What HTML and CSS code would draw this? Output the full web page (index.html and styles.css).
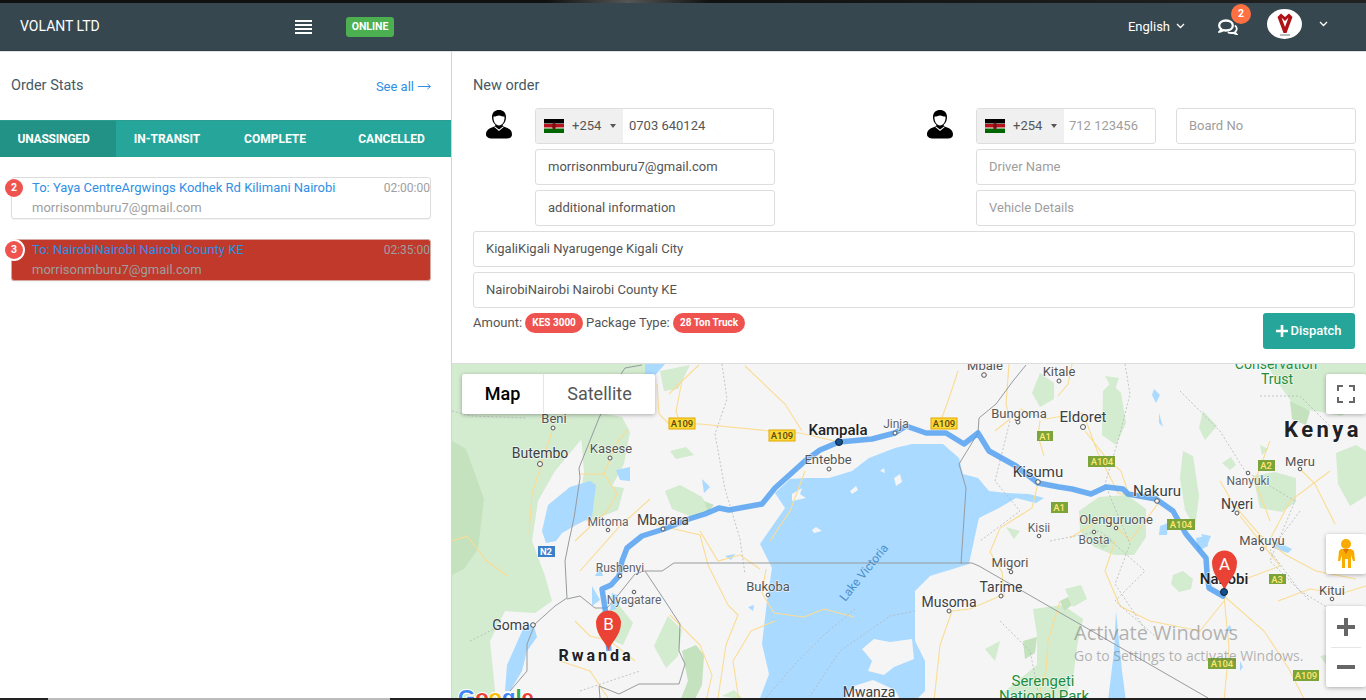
FILE: index.html
```html
<!DOCTYPE html>
<html lang="en">
<head>
<meta charset="utf-8">
<title>Volant Ltd</title>
<link rel="stylesheet" href="styles.css">
</head>
<body>
<div class="top-strip"></div>
<header class="topbar">
  <div class="brand">VOLANT LTD</div>
  <svg class="burger" width="17" height="14" viewBox="0 0 17 14"><path d="M0 1h17M0 5h17M0 9h17M0 13h17" stroke="#fff" stroke-width="2"/></svg>
  <span class="online">ONLINE</span>
  <div class="spacer"></div>
  <div class="lang">English <svg class="chev" width="9" height="6" viewBox="0 0 9 6"><path d="M1 1l3.500 3.500L8 1" fill="none" stroke="#fff" stroke-width="1.300"/></svg></div>
  <div class="chat">
    <svg width="20" height="18" viewBox="0 0 20 18"><path d="M8 2.500C4 2.500 1.200 4.700 1.200 7.500c0 1.500.8 2.700 2 3.600-.2 1-.7 1.800-1.300 2.400 1.400-.1 2.600-.6 3.500-1.300.8.200 1.700.3 2.600.3 4 0 6.800-2.200 6.800-5S12 2.500 8 2.500z" fill="none" stroke="#fff" stroke-width="2.300"/><path d="M16.800 7.500c1.300.8 2 2 2 3.300 0 1.200-.6 2.200-1.600 3 .1.900.6 1.700 1.100 2.200-1.200-.1-2.200-.6-3-1.200-.7.200-1.400.2-2.100.2-1.300 0-2.500-.3-3.400-.8" fill="none" stroke="#fff" stroke-width="1.800"/></svg>
    <span class="chat-badge">2</span>
  </div>
  <div class="avatar">
    <svg width="16" height="24" viewBox="0 0 16 24"><path d="M.5 5L4 1.500 8 5l4-3.500L15.500 5 9.500 21h-3z" fill="#b01116"/><path d="M4.500 5.500L8 15l3.500-9.500L8 9z" fill="#fff"/><path d="M3 23h10" stroke="#777" stroke-width="1"/></svg>
  </div>
  <svg class="chev user-chev" width="9" height="6" viewBox="0 0 9 6"><path d="M1 1l3.500 3.500L8 1" fill="none" stroke="#fff" stroke-width="1.300"/></svg>
</header>

<main class="main">
  <aside class="stats">
    <div class="stats-head">
      <span class="title">Order Stats</span>
      <a class="see-all">See all <svg class="arrow" width="13" height="7" viewBox="0 0 13 7"><path d="M0 3.500h12M9.500 1l3 2.500-3 2.500" fill="none" stroke="#2f8fe6" stroke-width="1"/></svg></a>
    </div>
    <nav class="tabs">
      <span class="tab active">UNASSINGED</span>
      <span class="tab t2">IN-TRANSIT</span>
      <span class="tab t3">COMPLETE</span>
      <span class="tab t4">CANCELLED</span>
    </nav>
    <div class="orders">
      <article class="order">
        <span class="num">2</span>
        <div class="line1"><span class="to">To: Yaya CentreArgwings Kodhek Rd Kilimani Nairobi</span><span class="time">02:00:00</span></div>
        <div class="mail">morrisonmburu7@gmail.com</div>
      </article>
      <article class="order late">
        <span class="num ring">3</span>
        <div class="line1"><span class="to">To: NairobiNairobi Nairobi County KE</span><span class="time">02:35:00</span></div>
        <div class="mail">morrisonmburu7@gmail.com</div>
      </article>
    </div>
  </aside>

  <section class="work">
    <form class="form">
      <div class="title new">New order</div>
      <div class="parties">
        <div class="party left">
          <svg class="person" width="26" height="29" viewBox="0 0 26 29"><path d="M13 0c4 0 7 2.500 7 7 0 3-1 6-3.500 8 0 .8 1 1.500 3 2.200 3.500 1.200 6.500 3 6.500 7.300 0 2.500-2 4-5 4H6c-3 0-6-1.500-6-4 0-4.300 3-6.100 6.500-7.300 2-.7 3-1.400 3-2.200C7 13 6 10 6 7c0-4.500 3-7 7-7z" fill="#000"/><path d="M7.500 6.500c2 .5 3.500-1 5.500-1s3.500 1.500 5.500 1c.3 3-.5 6.500-3.200 8.300-1.400.9-3.200.9-4.600 0C8 13 7.200 9.500 7.500 6.500z" fill="#fff"/><path d="M9 16.500l4 3 4-3 .8.500-4.800 4-4.800-4z" fill="#fff"/></svg>
          <div class="stack">
            <div class="field phone">
              <span class="dial"><svg class="flag" width="20" height="14" viewBox="0 0 20 14"><rect width="20" height="5" fill="#000"/><rect y="4.500" width="20" height="1" fill="#fff"/><rect y="5" width="20" height="4" fill="#b5121b"/><rect y="8.500" width="20" height="1" fill="#fff"/><rect y="9.500" width="20" height="4.500" fill="#006600"/><ellipse cx="10" cy="7" rx="1.800" ry="3.500" fill="#7a1115"/></svg><span class="code">+254</span><i class="caret"></i></span>
              <span class="val">0703 640124</span>
            </div>
            <div class="field wide"><span class="val">morrisonmburu7@gmail.com</span></div>
            <div class="field wide"><span class="val">additional information</span></div>
          </div>
        </div>
        <div class="party right">
          <svg class="person" width="26" height="29" viewBox="0 0 26 29"><path d="M13 0c4 0 7 2.500 7 7 0 3-1 6-3.500 8 0 .8 1 1.500 3 2.200 3.500 1.200 6.500 3 6.500 7.300 0 2.500-2 4-5 4H6c-3 0-6-1.500-6-4 0-4.300 3-6.100 6.500-7.300 2-.7 3-1.400 3-2.200C7 13 6 10 6 7c0-4.500 3-7 7-7z" fill="#000"/><path d="M7.500 6.500c2 .5 3.500-1 5.500-1s3.500 1.500 5.500 1c.3 3-.5 6.500-3.200 8.300-1.400.9-3.200.9-4.600 0C8 13 7.200 9.500 7.500 6.500z" fill="#fff"/><path d="M9 16.500l4 3 4-3 .8.500-4.800 4-4.800-4z" fill="#fff"/></svg>
          <div class="stack">
            <div class="split">
              <div class="field phone short">
                <span class="dial"><svg class="flag" width="20" height="14" viewBox="0 0 20 14"><rect width="20" height="5" fill="#000"/><rect y="4.500" width="20" height="1" fill="#fff"/><rect y="5" width="20" height="4" fill="#b5121b"/><rect y="8.500" width="20" height="1" fill="#fff"/><rect y="9.500" width="20" height="4.500" fill="#006600"/><ellipse cx="10" cy="7" rx="1.800" ry="3.500" fill="#7a1115"/></svg><span class="code">+254</span><i class="caret"></i></span>
                <span class="ph">712 123456</span>
              </div>
              <div class="field grow"><span class="ph">Board No</span></div>
            </div>
            <div class="field"><span class="ph">Driver Name</span></div>
            <div class="field"><span class="ph">Vehicle Details</span></div>
          </div>
        </div>
      </div>
      <div class="field addr"><span class="val">KigaliKigali Nyarugenge Kigali City</span></div>
      <div class="field addr"><span class="val">NairobiNairobi Nairobi County KE</span></div>
      <div class="summary">
        <div class="facts">Amount: <span class="pill">KES 3000</span> Package Type: <span class="pill">28 Ton Truck</span></div>
        <button class="dispatch" type="button"><svg width="12" height="12" viewBox="0 0 12 12"><path d="M6 0v12M0 6h12" stroke="#fff" stroke-width="2.600"/></svg>Dispatch</button>
      </div>
    </form>

    <div class="map">
      <svg class="map-art" width="914" height="337" viewBox="452 363 914 337">
        <rect x="452" y="363" width="914" height="337" fill="#f5f5f5"/>
        <g fill="#d3ebcf">
          <path d="M452 363H660L645 378 620 378 604 400 598 420 580 440 555 470 538 500 532 540 545 575 552 600 535 612 505 610 490 640 496 700H452z"/>
          <path d="M580 420l20-8 22 4 8 15-6 32-12 22 12 2-6 22-30 12-10-10 6-40z"/>
          <path d="M665 490l15-6 22 12 8 14-18 6-20-8zM605 612l14-8 14 18-10 22-14-6zM654 645l14-30 14 14-4 26-12 12zM660 370l30-6-12 24-14 2zM670 450l16-4 8 8-18 4z"/>
          <path d="M1079 510l20-14 28-2 19 14 0 28-12 18-20 0-20-8-14-16z"/>
          <path d="M1103 390l8-8 10 10 5 30-10 22-14-10zM1183 450l10 5 6 40-4 32-10-18-5-32z"/>
          <path d="M1266 363h100v40l-25 12-20-4-25-4-18-25zM1253 475l22-4 21 6 0 24-14 10-22-4zM1336 452l20-8 10 6v45l-16 10-12-22z"/>
          <path d="M1173 574l10-4 10 8-2 10-12 3-8-8zM1020 530l-14-4 8 12zM1040 372l14 10 0 16-14 8-8-14zM1105 375l14 2-5 14zM1203 410l14 15-12 14-6-12zM1222 462l9-6 5 8-6 5zM1260 444l8 4-6 6z"/>
          <path d="M1033 608l30-4 20 14-6 28-4 32-10 22h-38l-22-8 14-12 20-16 0-30zM1065 588l16-4 6 14-14 8zM1000 640l-15 8 10 12zM1320 655l46-10v40l-26 0zM722 695l12-6 10 10z"/>
        </g>
        <g fill="#c3e2bd">
          <path d="M452 440l14 8 18 50-6 50-14 20-12 6zM682 650l14-6 8 10-2 30-8 16h-14l8-20zM1023 640l14-4-2 16-10 6zM1095 540l12-6 6 6-10 8zM1290 400l20 10-4 14-14-6zM1060 600l8-4 4 8-8 6zM704 500l10 4-6 6z"/>
        </g>
        <path d="M775 492L790 478 805 477 829 477 852 470 869 457 895 447 912 443 943 443 959 457 963 473 978 477 989 490 1006 492 1029 493 1044 497 1036 502 1016 497 999 507 979 517 976 530 969 563 930 575 915 590 915 640 925 660 925 690 915 700H759L769 673 762 643 767 600 772 567 760 543 785 507Z" fill="#aadaff"/>
        <g fill="#f5f5f5">
          <path d="M792 493l10-6-2 6 6 4-14 3zM862 648l12-10 16 3 22-3 2 20-20 8-10 8-16-4 4-10zM845 700l6-14 22-7 22 10 6 11zM812 529l4-3 6 4-8 2zM894 477l6-4 2 8-6 4zM850 490l6-5 2 4-6 4zM880 470l4-3 1 5z"/>
        </g>
        <g fill="#aadaff">
          <path d="M542 530l6-26 22-18 20-6 6 4-4 32-16 8-14 8-6 8-10 2z"/>
          <path d="M505 690l2-26 16-36 10-6 4 14-10 14-5 20-12 20z"/>
          <path d="M645 363h20l-14 16-6-6zM616 469l14-3 0 14-10-1zM1160 525l8-3-1 12-8 0zM1196 537l10-2 2 10-10 5zM1201 533l10 2-4 10zM1154 388l6 6-4 8-4-8zM1159 412l4 14-4-4zM1276 540l16 8-4 4-12-4zM702 478l8 8-6 6zM600 565l-5 10 8 0zM592 585l8 14-8 6zM612 592l6 2-2 14-6 2zM1116 610l6 60 4 30h-18l6-50zM1240 660l3 6-3 4zM725 555l10-2-4 6zM748 606l6-2-1 6zM1230 624l-6 6 8 0z"/>
        </g>
        <g fill="none" stroke="#fbdc93" stroke-width="1.100">
          <path d="M745 365l40 38 17 27M669 393l13-13 17-16M659 413l10 10 31 0 70 7 30 2 39 9M682 380l-6 30 4 13M659 413l-2-30M580 473l24 0 13 20-10 17-32 30M529 533l3-40 20-63M452 540l15-5 20 25 20 15M604 473l12-30 12-15M650 498l-30 27-40 45M640 520l60 14 8 30 20 40 10 10-12 30-8 53M700 530l18 30 22-6 20 14M766 568l-4 24 12 20 30 4 20-8 30 8M805 470l-15 40-20 30M670 614l30 30 12 30-6 26M775 620l-24 10-18 30 6 40M575 620l15 15 20 5 25 20M560 660l30 10 20 30"/>
          <path d="M1020 408l25 10 38-6 15 40 20 40 38 8M1038 482l-6 25-32 20-10 24 12 20 2 25M1085 430l22 28 14 12 8 24M1160 500l-30 40-24-25-36 22M1220 480l14 24 26 30 26 20 30 16 40 8M1224 595l40 35 25 38 16 32M1224 595l5 52-5 53M1240 515l40 50-40 15M1000 595l-30 13-18 2-12 34-6 56M1150 620l50 10 24-30M1330 470l-40 30-25 48M1270 440l-15 40 15 40M1300 468l15 15 20 40M1278 600l32-12 30 5 26-8M1009 363l-3 40 4 15-15 12M1115 540l-10 30 15 35 30 15M958 370l-10 30-8 22M1072 363l-4 20-10 12M1040 420l-2 15 6 20M1060 600l-12 40-2 30-8 28"/>
        </g>
        <g fill="none" stroke="#b3b7ba" stroke-width=".8" stroke-dasharray="2 2">
          <path d="M452 410l20 5 55 2M722 363l5 35-12 35 10 55 15 50 5 35M855 608l-30 25-30 30-30 35M915 610l-25 5-50 35-30 45M1010 420l-15 60 25 30-40 30M1125 363l5 30-10 40-15 50 25 60-15 40 30 45M1180 390l40 40 25 40 50 30-25 60 40 40M1050 540l50-10 45 40-30 30 40 35M1260 395l40 0 30 30M1300 510l-30 40 30 40 50 30M1000 620l30 30 10 50M470 640l30-15M580 690l30-10 30-10"/>
        </g>
        <g fill="none" stroke="#979b9e" stroke-width="1" stroke-linejoin="round">
          <path d="M642 364l-17 3-8 12-18 38-20 50 1 10-6 40-5 23-4 20 2 37-12 8-20 18-8 20 0 27-17 20"/>
          <path d="M567 598l13-3 15 12 12 0 12-14 16-20 9-3 18 0 12-8h298l7 3 229 132"/>
          <path d="M961 563l5-76-7-24 19-31 1-15 17-14 17-23 13-16"/>
          <path d="M645 570l20 30 15 23-1 27 6 13-6 20-40 0-20 10-20-8 1 12"/>
        </g>
        <path d="M609 650L605 607 602 588 611 584 619 575 622 560 627 547 642 535 664 528 689 518 705 513 719 507 729 509 762 503 775 487 805 460 820 449 839 441 872 438 895 432 906 425 926 432 946 432 964 443 978 432 989 450 1016 465 1038 482 1059 486 1072 488 1091 493 1106 486 1123 488 1128 493 1156 498 1173 510 1186 533 1206 557 1207 572 1209 587 1223 595 1224 591" fill="none" stroke="#4a9cf0" stroke-opacity=".8" stroke-width="5.500" stroke-linejoin="round"/>
        <g fill="#f8f8f8" stroke="#555" stroke-width="1">
          <circle cx="553" cy="427" r="2"/><circle cx="540" cy="463" r="2.500"/><circle cx="610" cy="457" r="2"/><circle cx="829" cy="468" r="2"/><circle cx="608" cy="529" r="1.800"/><circle cx="663" cy="528" r="2"/><circle cx="620" cy="575" r="1.800"/><circle cx="634" cy="591" r="1.800"/><circle cx="768" cy="594" r="1.800"/><circle cx="533" cy="624" r="2.300"/><circle cx="895" cy="432" r="2"/>
          <circle cx="984" cy="374" r="2.300"/><circle cx="1059" cy="380" r="2"/><circle cx="1018" cy="421" r="2"/><circle cx="1083" cy="426" r="2.500"/><circle cx="1300" cy="468" r="1.800"/><circle cx="1248" cy="472" r="1.800"/><circle cx="1038" cy="481" r="2.300"/><circle cx="1157" cy="500" r="2.300"/><circle cx="1237" cy="512" r="2"/><circle cx="1116" cy="527" r="1.800"/><circle cx="1039" cy="535" r="1.800"/><circle cx="1094" cy="531" r="1.800"/><circle cx="1262" cy="548" r="1.800"/><circle cx="1011" cy="571" r="1.800"/><circle cx="1001" cy="595" r="2"/><circle cx="949" cy="610" r="2"/><circle cx="1332" cy="598" r="1.800"/>
        </g>
        <circle cx="839" cy="441" r="3.500" fill="#15508c" stroke="#123" stroke-width="1"/>
        <g class="lbl">
          <text x="554" y="422" class="s13">Beni</text>
          <text x="540" y="457" class="s14">Butembo</text>
          <text x="611" y="452" class="s13">Kasese</text>
          <text x="838" y="434" class="s15 m">Kampala</text>
          <text x="896" y="427" class="s12">Jinja</text>
          <text x="828" y="463" class="s13">Entebbe</text>
          <text x="608" y="525" class="s12">Mitoma</text>
          <text x="663" y="524" class="s14">Mbarara</text>
          <text x="620" y="571" class="s12">Rushenyi</text>
          <text x="634" y="603" class="s12">Nyagatare</text>
          <text x="768" y="590" class="s13">Bukoba</text>
          <text x="511" y="629" class="s14">Goma</text>
          <text x="596" y="660" class="country">Rwanda</text>
          <text x="869" y="696" class="s14">Mwanza</text>
          <text x="985" y="369" class="s13">Mbale</text>
          <text x="1059" y="375" class="s13">Kitale</text>
          <text x="1019" y="417" class="s13">Bungoma</text>
          <text x="1083" y="421" class="s15">Eldoret</text>
          <text x="1300" y="465" class="s13">Meru</text>
          <text x="1248" y="484" class="s12">Nanyuki</text>
          <text x="1038" y="476" class="s15">Kisumu</text>
          <text x="1157" y="495" class="s15">Nakuru</text>
          <text x="1237" y="508" class="s14">Nyeri</text>
          <text x="1116" y="523" class="s13">Olenguruone</text>
          <text x="1039" y="531" class="s12">Kisii</text>
          <text x="1094" y="543" class="s12">Bosta</text>
          <text x="1262" y="544" class="s13">Makuyu</text>
          <text x="1010" y="566" class="s13">Migori</text>
          <text x="1001" y="591" class="s14">Tarime</text>
          <text x="949" y="606" class="s14">Musoma</text>
          <text x="1332" y="594" class="s13">Kitui</text>
          <text x="1224" y="583" class="s15 m">Nairobi</text>
          <text x="1323" y="436" class="kenya">Kenya</text>
          <text x="1276" y="368" class="s14 park">Conservation</text>
          <text x="1277" y="383" class="s14 park">Trust</text>
          <text x="1043" y="685" class="s15 park">Serengeti</text>
          <text x="1044" y="700" class="s15 park">National Park</text>
          <text transform="translate(867 574) rotate(-51)" class="lake">Lake Victoria</text>
        </g>
        <g class="shield y">
          <rect x="669" y="417" width="26" height="11"/><text x="682" y="426">A109</text>
          <rect x="769" y="429" width="26" height="11"/><text x="782" y="438">A109</text>
          <rect x="931" y="417" width="26" height="11"/><text x="944" y="426">A109</text>
        </g>
        <g class="shield g">
          <rect x="1037" y="430" width="16" height="10"/><text x="1045" y="439">A1</text>
          <rect x="1088" y="455" width="27" height="11"/><text x="1102" y="464">A104</text>
          <rect x="1258" y="459" width="17" height="11"/><text x="1266" y="468">A2</text>
          <rect x="1051" y="501" width="17" height="11"/><text x="1059" y="510">A1</text>
          <rect x="1167" y="518" width="28" height="11"/><text x="1181" y="527">A104</text>
          <rect x="1269" y="573" width="17" height="10"/><text x="1277" y="582">A3</text>
          <rect x="1208" y="657" width="28" height="11"/><text x="1222" y="666">A104</text>
          <rect x="1293" y="669" width="26" height="11"/><text x="1306" y="678">A109</text>
        </g>
        <g class="shield b">
          <rect x="538" y="545" width="17" height="11"/><text x="546" y="554">N2</text>
        </g>
        <path d="M1224.500 590c-1.500-8-12.500-15-12.500-28a12.500 12.500 0 1 1 25 0c0 13-11 20-12.500 28z" fill="#ea4335"/>
        <text x="1224.500" y="569" class="pin">A</text>
        <path d="M608.500 650c-1.500-8-12.500-15-12.500-28a12.500 12.500 0 1 1 25 0c0 13-11 20-12.500 28z" fill="#ea4335"/>
        <text x="608.500" y="629" class="pin">B</text>
        <circle cx="1224" cy="591" r="3.500" fill="#15508c" stroke="#123" stroke-width="1"/>
        <text x="458" y="704" class="google"><tspan fill="#4285f4">G</tspan><tspan fill="#ea4335">o</tspan><tspan fill="#fbbc05">o</tspan><tspan fill="#4285f4">g</tspan><tspan fill="#34a853">l</tspan><tspan fill="#ea4335">e</tspan></text>
        <text x="1074" y="639" class="wm big">Activate Windows</text>
        <text x="1074" y="660" class="wm">Go to Settings to activate Windows.</text>
      </svg>
      <div class="maptype">
        <span class="mt on">Map</span>
        <span class="mt">Satellite</span>
      </div>
      <div class="ctrl full"><svg width="18" height="18" viewBox="0 0 18 18"><path d="M1 6V1h5M12 1h5v5M17 12v5h-5M6 17H1v-5" fill="none" stroke="#666" stroke-width="2"/></svg></div>
      <div class="ctrl peg"><svg width="18" height="30" viewBox="0 0 18 30"><circle cx="9" cy="5" r="5" fill="#f9ab00"/><path d="M4 10h10l3 2 1 10h-2l-2-6v13h-3v-9H8v9H5V16l-2 6H1l1-10z" fill="#f9ab00"/><path d="M6 10h6l-3 5z" fill="#e37400"/></svg></div>
      <div class="ctrl zoom">
        <span class="zbtn"><svg width="18" height="18" viewBox="0 0 18 18"><path d="M9 0v18M0 9h18" stroke="#666" stroke-width="4"/></svg></span>
        <span class="zbtn"><svg width="18" height="4" viewBox="0 0 18 4"><path d="M0 2h18" stroke="#666" stroke-width="4"/></svg></span>
      </div>
    </div>
  </section>
</main>
<div class="bottom-strip"><span class="scroll"></span></div>
</body>
</html>
```
FILE: styles.css
```css
* { box-sizing: border-box; }
html, body { margin: 0; padding: 0; height: 700px; overflow: hidden; }
body { font-family: Roboto, "Liberation Sans", sans-serif; font-size: 13px; color: #455a64; background: #fff; display: flex; flex-direction: column; position: relative; }

.top-strip { height: 3px; background: linear-gradient(90deg, #111 0, #111 40%, #555 46%, #111 52%, #222 100%); flex: none; }
.topbar { height: 48px; flex: none; background: #37474f; border-bottom: 1px solid #2f3e46; display: flex; align-items: center; color: #fff; padding: 2px 0 0 20px; }
.brand { width: 275px; font-size: 14px; font-weight: 400; margin-top: -3px; color: #fff; }
.burger { display: block; margin-top: -1px; }
.online { margin-left: 34px; background: #4caf50; color: #fff; font-size: 10.500px; font-weight: 700; line-height: 20px; height: 20px; width: 48px; text-align: center; border-radius: 3px; margin-top: -1px; }
.spacer { flex: 1; }
.lang { font-size: 13px; display: flex; align-items: center; gap: 6px; margin-top: -3px; }
.chev { display: block; }
.chat { position: relative; margin-left: 33px; width: 20px; height: 18px; margin-top: -1px; }
.chat svg { display: block; }
.chat-badge { position: absolute; left: 13px; top: -14px; width: 20px; height: 20px; border-radius: 50%; background: #ff7043; color: #fff; font-size: 10.500px; font-weight: 700; line-height: 20px; text-align: center; }
.avatar { margin-left: 29px; width: 35px; height: 30px; border-radius: 50%; background: #fff; display: flex; align-items: center; justify-content: center; margin-top: -7px; }
.user-chev { margin-left: 17px; margin-right: 38px; margin-top: -7px; }

.main { flex: 1; display: flex; min-height: 0; }
.title { font-size: 14.500px; color: #455a64; }

.stats { width: 452px; flex: none; border-right: 1px solid #d4d4d4; border-top: 1px solid #dde3e6; }
.stats-head { height: 68px; display: flex; align-items: center; justify-content: space-between; padding: 0 20px 2px 11px; }
.see-all { color: #2f8fe6; font-size: 13px; display: flex; align-items: center; gap: 4px; padding-top: 2px; }
.arrow { display: block; margin-top: 1px; }
.tabs { height: 37px; background: #26a69a; display: flex; align-items: center; color: #fff; font-size: 12px; font-weight: 700; border-top: 1px solid #2a9c90; }
.tab { height: 100%; display: flex; align-items: center; justify-content: center; }
.tab.active { width: 116px; background: #229287; padding-right: 9px; letter-spacing: -.2px; }
.t2 { width: 102px; }
.t3 { width: 114px; }
.t4 { width: 119px; }

.orders { padding: 20px 20px 0 11px; display: flex; flex-direction: column; gap: 20px; }
.order { position: relative; height: 42px; border: 1px solid #ddd; border-radius: 3px; background: #fff; box-shadow: 0 1px 1px rgba(0,0,0,.05); padding: 2px 0 0 20px; }
.order.late { background: #c0392b; border-color: #d5a9a4; }
.line1 { display: flex; justify-content: space-between; align-items: baseline; font-size: 13px; line-height: 16px; }
.to { color: #2f8fe6; }
.time { color: #9e9e9e; font-size: 12px; }
.mail { color: #9e9e9e; font-size: 13px; line-height: 16px; margin-top: 4px; }
.num { position: absolute; left: -7px; top: 1px; width: 18px; height: 18px; border-radius: 50%; background: #ef5350; color: #fff; font-size: 10.500px; font-weight: 700; line-height: 18px; text-align: center; }
.num.ring { box-shadow: 0 0 0 2px #fff; }

.work { flex: 1; display: flex; flex-direction: column; min-width: 0; border-top: 1px solid #dde3e6; }
.form { height: 311px; padding: 0 10px 0 21px; flex: none; }
.new { height: 56px; display: flex; align-items: center; padding-top: 10px; }
.parties { display: flex; justify-content: space-between; margin-bottom: 5px; }
.party { display: flex; align-items: flex-start; }
.party.left { width: 302px; }
.party.right { width: 442px; }
.person { margin: 2px 23px 0 13px; flex: none; }
.stack { flex: 1; display: flex; flex-direction: column; gap: 5px; min-width: 0; }
.split { display: flex; gap: 20px; }
.field { height: 36px; border: 1px solid #ddd; border-radius: 3px; background: #fff; display: flex; align-items: center; padding: 0 0 2px 12px; font-size: 13px; color: #555; }
.field.phone { padding: 0; width: 239px; overflow: hidden; }
.field.short { width: 180px; }
.field.grow { flex: 1; }
.field.addr { margin: 0 1px 5px 0; }
.dial { width: 87px; height: 100%; background: #f0f0f0; display: flex; align-items: center; padding: 0 0 1px 8px; color: #555; flex: none; }
.flag { display: block; margin-right: 8px; }
.code { font-size: 13px; margin-top: -1px; }
.caret { width: 0; height: 0; border-left: 3px solid transparent; border-right: 3px solid transparent; border-top: 4px solid #555; margin-left: 9px; }
.phone .val { margin: -2px 0 0 6px; }
.phone .ph { margin: -2px 0 0 5px; }
.val { color: #555; }
.ph { color: #9e9e9e; }
.summary { display: flex; justify-content: space-between; align-items: flex-start; margin-right: 1px; }
.facts { font-size: 13px; line-height: 20px; color: #555; }
.pill { display: inline-block; background: #ef5350; color: #fff; font-size: 10px; font-weight: 700; line-height: 20px; height: 20px; padding: 0 7px; border-radius: 10px; vertical-align: top; }
.dispatch { width: 92px; height: 36px; border: 0; border-radius: 3px; background: #26a69a; color: #fff; font: 500 13px Roboto, sans-serif; display: flex; align-items: center; justify-content: center; gap: 2px; padding: 0 0 1px; }

.map { position: relative; flex: 1; min-height: 0; border-top: 1px solid #ddd; overflow: hidden; }
.map-art { display: block; }
.lbl text { font-family: Roboto, sans-serif; text-anchor: middle; fill: #3c4043; stroke: rgba(255,255,255,.6); stroke-width: 1.500px; paint-order: stroke; }
.s12 { font-size: 12px; fill: #5f6368 !important; }
.s13 { font-size: 13px; fill: #555 !important; }
.s14 { font-size: 14px; }
.s15 { font-size: 15px; }
.m { font-weight: 500; fill: #202124 !important; }
.country { font-size: 16px; font-weight: 700; letter-spacing: 3px; fill: #202124 !important; }
.kenya { font-size: 22px; font-weight: 700; letter-spacing: 3.500px; fill: #202124 !important; }
.park { fill: #1e8e3e !important; }
.lake { font-size: 12px; fill: #4c8fc9 !important; stroke: none !important; }
.shield text { font-family: Roboto, sans-serif; font-size: 9.500px; font-weight: 500; text-anchor: middle; }
.shield.y rect { fill: #fdd835; stroke: #e0a800; stroke-width: 1px; }
.shield.y text { fill: #5b4a10; }
.shield.g rect { fill: #7ca43a; }
.shield.g text { fill: #ffe770; }
.shield.b rect { fill: #3b7fc9; }
.shield.b text { fill: #fff; font-weight: 700; }
.pin { font-family: Roboto, sans-serif; font-size: 17px; fill: #fff; text-anchor: middle; }
.google { font-family: "Liberation Sans", sans-serif; font-size: 22px; font-weight: 700; stroke: #fff; stroke-width: 2px; paint-order: stroke; }
.wm { font-family: "Open Sans", sans-serif; font-size: 14px; fill: rgba(110,110,110,.5); }
.wm.big { font-size: 20px; }

.maptype { position: absolute; left: 10px; top: 10px; height: 40px; background: #fff; border-radius: 2px; box-shadow: 0 1px 4px rgba(0,0,0,.3); display: flex; font-size: 18px; padding-bottom: 1px; }
.mt { display: flex; align-items: center; justify-content: center; width: 82px; color: #565656; }
.mt.on { color: #000; font-weight: 500; border-right: 1px solid #e6e6e6; }
.mt:last-child { width: 111px; }
.ctrl { position: absolute; right: 0; width: 40px; background: #fff; border-radius: 2px; box-shadow: 0 1px 4px rgba(0,0,0,.3); display: flex; align-items: center; justify-content: center; }
.full { top: 10px; height: 40px; }
.peg { top: 170px; height: 40px; }
.zoom { top: 242px; height: 81px; flex-direction: column; }
.zbtn { height: 40px; width: 100%; display: flex; align-items: center; justify-content: center; }
.zbtn + .zbtn { border-top: 1px solid #e6e6e6; width: 30px; }

.bottom-strip { position: absolute; left: 0; right: 0; bottom: 0; height: 2px; background: #222; z-index: 5; }
.scroll { display: block; width: 342px; height: 2px; margin-left: 48px; background: #bbb; }
```
